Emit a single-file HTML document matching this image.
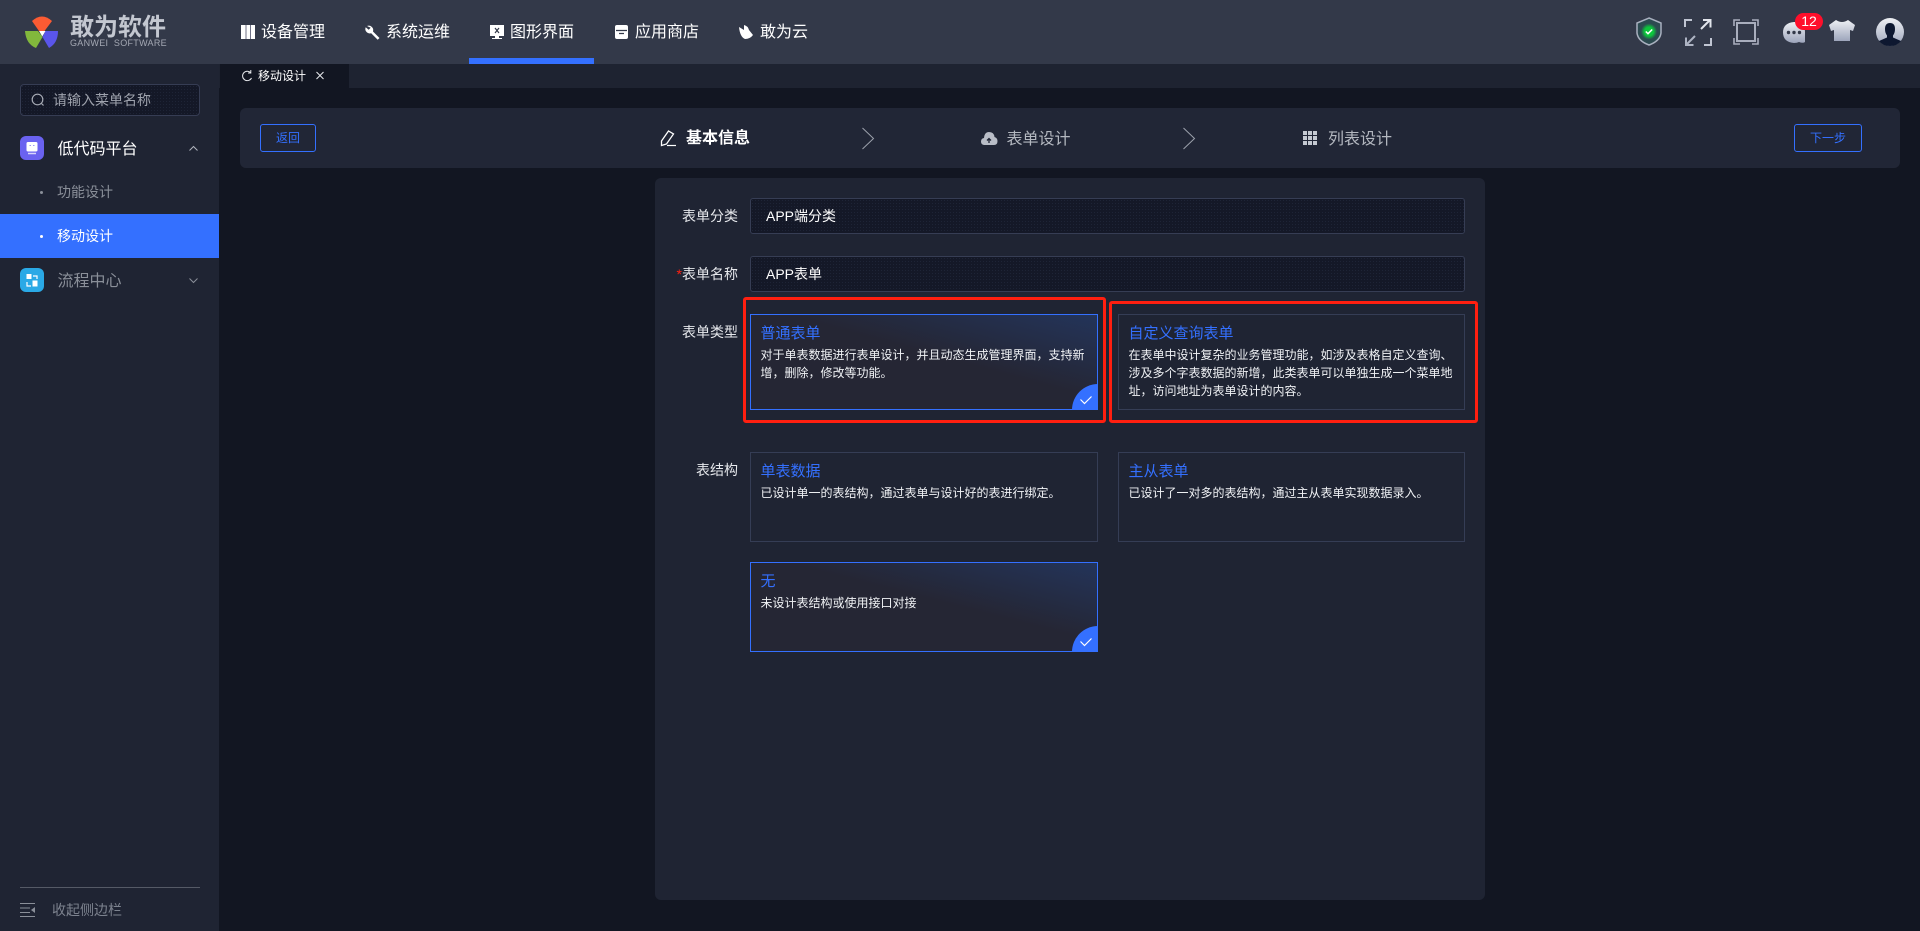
<!DOCTYPE html>
<html lang="zh-CN">
<head>
<meta charset="utf-8">
<title>移动设计</title>
<style>
html,body{margin:0;padding:0;width:1920px;height:931px;overflow:hidden;background:#121622;}
body{position:relative;font-family:"Liberation Sans","Noto Sans CJK SC",sans-serif;color:#fff;}
div,span{position:absolute;box-sizing:border-box;}
.t{white-space:nowrap;}
.nav{font-size:16px;line-height:24px;top:21px;color:#fff;}
.side{font-size:16px;line-height:24px;}
.sub{font-size:14px;line-height:20px;}
.lab{font-size:14px;line-height:20px;width:70px;left:668px;text-align:right;color:#e6e8ec;}
.inp{left:750px;width:715px;height:36px;border:1px solid #363d54;border-radius:3px;background-color:#141827;background-image:radial-gradient(#1e2436 .6px,transparent .7px);background-size:3px 3px;font-size:14px;line-height:34px;padding-left:15px;color:#fff;}
.card{border:1px solid #353d55;background:#1f2433;}
.card.on{border-color:#3470ff;background:linear-gradient(to top right,#252634 55%,#23345a 100%);}
.ct{left:9.500px;top:9px;font-size:15px;line-height:20px;color:#3470ff;white-space:nowrap;}
.cd{left:9.500px;top:31px;width:330px;font-size:12px;line-height:18px;color:#f0f2f5;}
.corner{right:-1px;bottom:-1px;width:26px;height:26px;background:#3470ff;border-top-left-radius:26px;}
.btn{top:124px;height:28px;border:1px solid #3470ff;border-radius:3px;font-size:12px;line-height:26px;text-align:center;color:#3470ff;}
.red{border:3px solid #ff1f10;border-radius:3px;}
</style>
</head>
<body>
<!-- header -->
<div style="left:0;top:0;width:1920px;height:64px;background:#333949;"></div>
<div style="left:469px;top:58px;width:125px;height:6px;background:#3470ff;"></div>
<div class="t" style="left:70px;top:14px;font-size:24px;line-height:28px;font-weight:700;color:#c3c7d0;">敢为软件</div>
<div class="t" style="left:70px;top:38px;font-size:9px;line-height:11px;letter-spacing:.3px;color:#a4a8b3;">GANWEI&nbsp; SOFTWARE</div>
<div class="t nav" style="left:261px;">设备管理</div>
<div class="t nav" style="left:386px;">系统运维</div>
<div class="t nav" style="left:510px;">图形界面</div>
<div class="t nav" style="left:635px;">应用商店</div>
<div class="t nav" style="left:760px;">敢为云</div>
<div class="t" style="left:1795px;top:13px;width:28px;height:17px;border-radius:9px;background:#ff0f2b;font-size:14px;line-height:17px;text-align:center;color:#fff;z-index:3;">12</div>

<!-- sidebar -->
<div style="left:0;top:64px;width:219px;height:867px;background:#1f2433;"></div>
<div style="left:20px;top:84px;width:180px;height:32px;border:1px solid #363d54;border-radius:4px;background-color:#141827;background-image:radial-gradient(#1e2436 .6px,transparent .7px);background-size:3px 3px;"></div>
<div class="t" style="left:53px;top:90px;font-size:14px;line-height:20px;color:#9ea2ac;">请输入菜单名称</div>
<div style="left:20px;top:136px;width:24px;height:24px;border-radius:6px;background:#6a62f0;"></div>
<div class="t side" style="left:57.500px;top:138px;color:#fff;">低代码平台</div>
<div style="left:40px;top:191px;width:3px;height:3px;border-radius:50%;background:#8a8f99;"></div>
<div class="t sub" style="left:57px;top:182px;color:#8a8f99;">功能设计</div>
<div style="left:0;top:214px;width:219px;height:44px;background:#3470ff;"></div>
<div style="left:40px;top:235px;width:3px;height:3px;border-radius:50%;background:#fff;"></div>
<div class="t sub" style="left:57px;top:226px;color:#fff;">移动设计</div>
<div style="left:20px;top:268px;width:24px;height:24px;border-radius:6px;background:#2aa9e6;"></div>
<div class="t side" style="left:57.500px;top:269.500px;color:#8a8f99;">流程中心</div>
<div style="left:20px;top:887px;width:180px;height:1px;background:#555a66;"></div>
<div class="t" style="left:52px;top:900px;font-size:14px;line-height:20px;color:#7d838f;">收起侧边栏</div>

<!-- tabs -->
<div style="left:219px;top:64px;width:1701px;height:24px;background:#1e2331;"></div>
<div style="left:220px;top:64px;width:129px;height:24px;background:#121622;"></div>
<div class="t" style="left:258px;top:67px;font-size:12px;line-height:18px;color:#fff;">移动设计</div>

<!-- step bar -->
<div style="left:240px;top:108px;width:1660px;height:60px;border-radius:6px;background:#212636;"></div>
<div class="t btn" style="left:260px;width:56px;">返回</div>
<div class="t btn" style="left:1794px;width:68px;">下一步</div>
<div class="t" style="left:686px;top:127px;font-size:16px;line-height:24px;font-weight:700;color:#fff;">基本信息</div>
<div class="t" style="left:1006.500px;top:127.500px;font-size:16px;line-height:24px;color:#b4b8c0;">表单设计</div>
<div class="t" style="left:1328px;top:127.500px;font-size:16px;line-height:24px;color:#b4b8c0;">列表设计</div>

<!-- form panel -->
<div style="left:655px;top:178px;width:830px;height:722px;border-radius:6px;background:#1f2433;"></div>
<div class="t lab" style="top:206px;">表单分类</div>
<div class="t inp" style="top:198px;">APP端分类</div>
<div class="t lab" style="top:264px;"><span style="position:static;color:#ff1f10;">*</span>表单名称</div>
<div class="t inp" style="top:256px;">APP表单</div>
<div class="t lab" style="top:322px;">表单类型</div>
<div class="t lab" style="top:460px;">表结构</div>

<div class="card on" style="left:750px;top:314px;width:348px;height:96px;">
  <div class="ct">普通表单</div>
  <div class="cd">对于单表数据进行表单设计，并且动态生成管理界面，支持新增，删除，修改等功能。</div>
  <div class="corner"></div>
</div>
<div class="card" style="left:1118px;top:314px;width:347px;height:96px;">
  <div class="ct">自定义查询表单</div>
  <div class="cd">在表单中设计复杂的业务管理功能，如涉及表格自定义查询、涉及多个字表数据的新增，此类表单可以单独生成一个菜单地址，访问地址为表单设计的内容。</div>
</div>
<div class="card" style="left:750px;top:452px;width:348px;height:90px;">
  <div class="ct">单表数据</div>
  <div class="cd">已设计单一的表结构，通过表单与设计好的表进行绑定。</div>
</div>
<div class="card" style="left:1118px;top:452px;width:347px;height:90px;">
  <div class="ct">主从表单</div>
  <div class="cd">已设计了一对多的表结构，通过主从表单实现数据录入。</div>
</div>
<div class="card on" style="left:750px;top:562px;width:348px;height:90px;">
  <div class="ct">无</div>
  <div class="cd">未设计表结构或使用接口对接</div>
  <div class="corner"></div>
</div>
<div class="red" style="left:743px;top:297px;width:363px;height:126px;"></div>
<div class="red" style="left:1109px;top:301px;width:369px;height:122px;"></div>

<!-- icons in page coordinates -->
<svg width="1920" height="931" viewBox="0 0 1920 931" style="position:absolute;left:0;top:0;z-index:2;" fill="none">
  <defs>
    <linearGradient id="g1" x1="0" y1="0" x2="0" y2="1"><stop offset="0" stop-color="#eef0f4"/><stop offset="1" stop-color="#9da5bb"/></linearGradient>
    <radialGradient id="g2"><stop offset=".55" stop-color="#0cc63c"/><stop offset="1" stop-color="#2b4c50"/></radialGradient>
  </defs>
  <!-- logo -->
  <path d="M32 21Q42 12 52 21L44.500 31H39Z" fill="#fb5b33"/>
  <path d="M25 31H38L42.500 37L36 48Q26 44 25 31Z" fill="#82b83c"/>
  <path d="M58 31H45.500L42.500 37L49 48Q58 43 58 31Z" fill="#5a55ea"/>
  <path d="M39 31H45.500L42.300 36.500Z" fill="#fff"/>
  <!-- nav icons -->
  <path d="M241 25H255V39H241Z" fill="#fff"/><path d="M246 25V39M250.500 25V39" stroke="#6f7186" stroke-width="1"/>
  <path d="M367 26a4.500 4.500 0 0 1 6 5.500l6.500 6.500l-1.800 1.800l-6.500-6.500a4.500 4.500 0 0 1-5.500-6l3 2.500l2-2Z" fill="#fff"/>
  <path d="M490 25H504V36H499V38H502V39H492V38H495V36H490Z" fill="#fff"/><path d="M495 28L499 33M499 28L495 33" stroke="#333949" stroke-width="1.200"/>
  <path d="M617 25H626Q628 25 628 27V37Q628 39 626 39H617Q615 39 615 37V27Q615 25 617 25Z" fill="#fff"/><path d="M616 30.500H627M619 33.500H624" stroke="#333949" stroke-width="1.200"/>
  <path d="M739 27L744 30V25Q748 26 749 30L753 35Q750 39 745 39Q740 37 739 27Z" fill="#fff"/>
  <!-- shield -->
  <path d="M1649 18L1661 23V33Q1660 41 1649 45Q1638 41 1637 33V23Z" fill="#2c4a50" stroke="#a9b0bf" stroke-width="1.500"/>
  <circle cx="1649" cy="31.500" r="8" fill="url(#g2)"/>
  <path d="M1645.800 31.500L1648 33.700L1652.200 29.500" stroke="#fff" stroke-width="1.500"/>
  <!-- expand -->
  <path d="M1685 27V20H1692M1711 38V45H1704" stroke="#c0c5d2" stroke-width="2"/>
  <path d="M1701 29L1710 20M1703 20H1710.500V27.500" stroke="#e2e5ec" stroke-width="2"/>
  <path d="M1695 36L1686 45M1686 37.500V45H1693.500" stroke="#aeb4c3" stroke-width="2"/>
  <!-- screen -->
  <rect x="1737" y="23" width="18" height="18" stroke="#a9aebd" stroke-width="2"/>
  <path d="M1734 26V20H1740M1752 20H1758V26M1758 38V44H1752M1740 44H1734V38" stroke="#a9aebd" stroke-width="1.600"/>
  <!-- chat -->
  <path d="M1794 22Q1805 22 1805 32V42Q1803 43.500 1799 42Q1797 43 1794 43Q1783 42 1783 32.500Q1783 23 1794 22Z" fill="url(#g1)"/>
  <circle cx="1788.500" cy="32.500" r="1.700" fill="#333949"/><circle cx="1794" cy="32.500" r="1.700" fill="#333949"/><circle cx="1799.500" cy="32.500" r="1.700" fill="#333949"/>
  <!-- shirt -->
  <path d="M1836 20Q1842 24 1848 20L1855 25L1853 31L1850 30V41H1834V30L1831 31L1829 25Z" fill="url(#g1)"/>
  <!-- avatar -->
  <circle cx="1890" cy="32" r="14" fill="url(#g1)"/>
  <path d="M1890 23Q1895 23 1895 29Q1895 33 1893 35.500V37.500L1901 41Q1897 46 1890 46Q1883 46 1879 41L1887 37.500V35.500Q1885 33 1885 29Q1885 23 1890 23Z" fill="#0e1830"/>
  <!-- search -->
  <circle cx="37.500" cy="99.500" r="5.300" stroke="#a5a9b3" stroke-width="1.200"/><path d="M41.500 103.500L43.500 105.500" stroke="#a5a9b3" stroke-width="1.200"/>
  <!-- sidebar icons -->
  <rect x="26.500" y="142" width="11" height="9.500" rx="1.500" fill="#fff"/><path d="M28 153.500H36" stroke="#d8d6fb" stroke-width="1.500"/>
  <path d="M29.500 145.500H31M33 145.500H34.500" stroke="#9e98f4" stroke-width="1"/>
  <path d="M189.500 150.500L193.500 146.500L197.500 150.500" stroke="#b0b4bd" stroke-width="1"/>
  <rect x="26.500" y="274" width="5" height="5" fill="#fff"/><rect x="32.500" y="280.500" width="5" height="6" fill="#fff"/>
  <path d="M33 276H37V279M31 286H27V282" stroke="#fff" stroke-width="1.200"/>
  <path d="M189.500 278.500L193.500 282.500L197.500 278.500" stroke="#8a8f99" stroke-width="1"/>
  <path d="M20 903.500H35M20 908H30M20 912.500H30M20 916.500H35" stroke="#8a8f99" stroke-width="1"/><path d="M35 907V913L31 910Z" fill="#8a8f99"/>
  <!-- tab icons -->
  <path d="M250.500 72.500A4.700 4.700 0 1 0 251.500 78" stroke="#e8eaee" stroke-width="1"/><path d="M250.800 70V73H248" stroke="#e8eaee" stroke-width="1"/>
  <path d="M316.500 72L323.500 79M323.500 72L316.500 79" stroke="#e8eaee" stroke-width="1"/>
  <!-- steps -->
  <path d="M661.500 141L668.500 131L673.500 134L666.500 144L661.500 145.500Z" stroke="#fff" stroke-width="1.300"/><path d="M667 145.500H676" stroke="#fff" stroke-width="1.200"/>
  <path d="M862.500 128L873.500 138.500L862.500 149" stroke="#9ca1ac" stroke-width="1"/>
  <path d="M989 132Q994 132 994.500 137Q997.500 138 997.500 141Q997.500 145 994 145H984Q981 144.500 981 141.500Q981 138.500 984 138Q984.500 132 989 132Z" fill="#b9bdc7"/>
  <path d="M989 143V139M987 140.500L989 138.500L991 140.500" stroke="#212636" stroke-width="1.300"/>
  <path d="M1183.500 128L1194.500 138.500L1183.500 149" stroke="#9ca1ac" stroke-width="1"/>
  <path d="M1303 131H1317V145H1303Z" fill="#c5c9d2"/><path d="M1307.500 131V145M1312.500 131V145M1303 135.500H1317M1303 140.500H1317" stroke="#212636" stroke-width="1"/>
  <!-- checks -->
  <path d="M1080.500 399.500L1084.500 403.500L1091.500 396.500" stroke="#fff" stroke-width="1.200"/>
  <path d="M1080.500 641.500L1084.500 645.500L1091.500 638.500" stroke="#fff" stroke-width="1.200"/>
</svg>
</body>
</html>
